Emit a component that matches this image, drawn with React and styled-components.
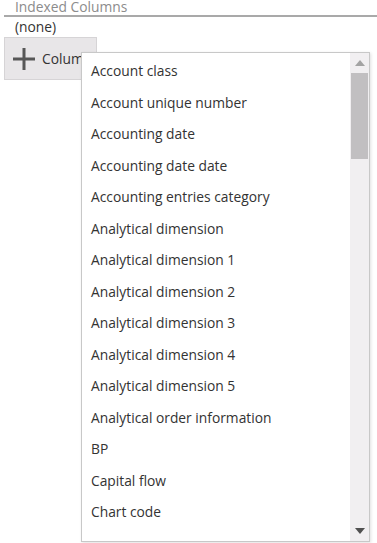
import React from 'react';
import styled, { createGlobalStyle } from 'styled-components';

const GlobalStyle = createGlobalStyle`
  html, body {
    margin: 0;
    padding: 0;
    background: #fff;
    font-family: "Open Sans", "Liberation Sans", sans-serif;
    overflow: hidden;
  }
`;

const columns = [
  'Account class',
  'Account unique number',
  'Accounting date',
  'Accounting date date',
  'Accounting entries category',
  'Analytical dimension',
  'Analytical dimension 1',
  'Analytical dimension 2',
  'Analytical dimension 3',
  'Analytical dimension 4',
  'Analytical dimension 5',
  'Analytical order information',
  'BP',
  'Capital flow',
  'Chart code',
];

const App = () => (
  <Page>
    <GlobalStyle />
    <Field>
      <Label>Indexed Columns</Label>
      <Value>(none)</Value>
      <AddButton>
        <svg width="22" height="22" viewBox="0 0 22 22">
          <path d="M11 0v22M0 11h22" stroke="#575757" strokeWidth="3" />
        </svg>
        Column
      </AddButton>
    </Field>

    <Dropdown>
      <List>
        {columns.map((c) => (
          <Item key={c}>{c}</Item>
        ))}
      </List>
      <Scrollbar>
        <Arrow>
          <svg width="10" height="6" viewBox="0 0 10 6">
            <path d="M0 6L5 0L10 6Z" fill="#a3a3a3" />
          </svg>
        </Arrow>
        <Track>
          <Thumb />
        </Track>
        <Arrow>
          <svg width="10" height="6" viewBox="0 0 10 6">
            <path d="M0 0L10 0L5 6Z" fill="#505050" />
          </svg>
        </Arrow>
      </Scrollbar>
    </Dropdown>
  </Page>
);

export default App;

const Page = styled.div`
  position: relative;
  width: 377px;
  height: 543px;
  overflow: hidden;
`;

const Field = styled.div`
  margin-top: -2px;
  padding-left: 4px;
  display: flex;
  flex-direction: column;
  align-items: flex-start;
`;

const Label = styled.div`
  align-self: stretch;
  padding-left: 11px;
  font-size: 13.8px;
  line-height: 17px;
  color: #8c8c8c;
  border-bottom: 2px solid #a9a9a9;
`;

const Value = styled.div`
  padding: 1px 0 0 11px;
  font-size: 13.8px;
  line-height: 18px;
  color: #333;
`;

const AddButton = styled.div`
  margin-top: 1px;
  box-sizing: border-box;
  width: 93px;
  height: 43px;
  display: flex;
  align-items: center;
  gap: 7px;
  padding-left: 8px;
  font-size: 13.8px;
  color: #333;
  background: #e8e6e8;
  border: 1px solid #d6d4d6;
  overflow: hidden;
  white-space: nowrap;
`;

const Dropdown = styled.div`
  position: absolute;
  left: 81px;
  top: 52px;
  width: 289px;
  height: 490px;
  box-sizing: border-box;
  display: flex;
  background: #fff;
  border: 1px solid #c8c8c8;
  box-shadow: 1px 1px 3px rgba(0, 0, 0, 0.12);
`;

const List = styled.div`
  flex: 1;
  overflow: hidden;
  padding-top: 2px;
`;

const Item = styled.div`
  height: 31.5px;
  line-height: 31.5px;
  padding-left: 9px;
  font-size: 13.8px;
  color: #333;
  white-space: nowrap;
`;

const Scrollbar = styled.div`
  width: 19px;
  display: flex;
  flex-direction: column;
  background: #f1eff1;
`;

const Arrow = styled.div`
  height: 20px;
  display: flex;
  align-items: center;
  justify-content: center;
`;

const Track = styled.div`
  flex: 1;
  padding: 0 1px;
`;

const Thumb = styled.div`
  height: 86px;
  background: #c1bfc1;
`;
